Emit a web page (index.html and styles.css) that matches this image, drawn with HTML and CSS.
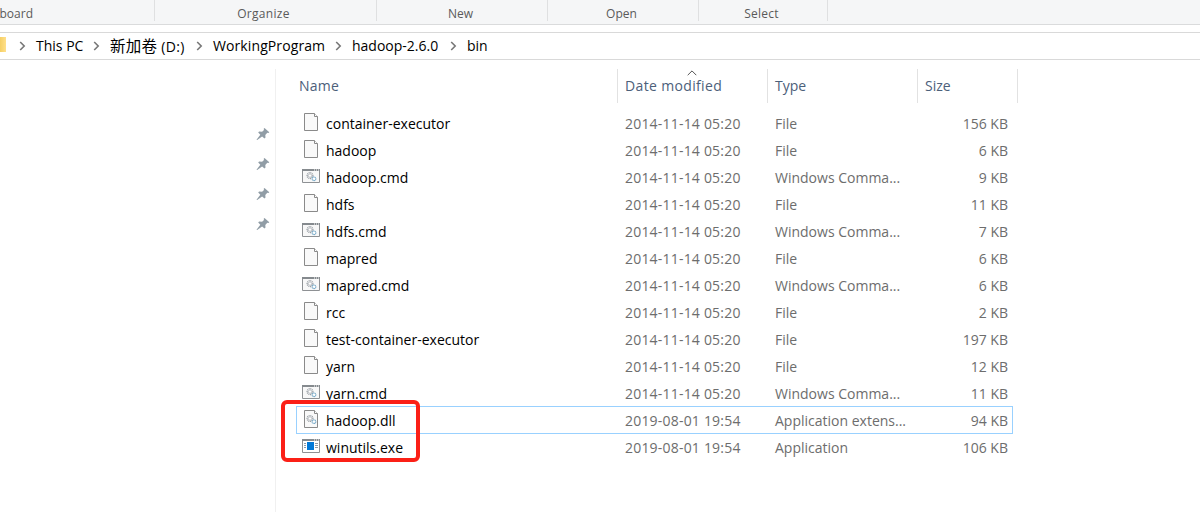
FILE: index.html
```html
<!DOCTYPE html>
<html>
<head>
    <title>bin</title>
    <meta charset="UTF-8">
    <link rel="stylesheet" href="styles.css">
</head>
<body>
    <svg class="symbols">
        <symbol id="file" viewBox="0 0 18 19">
            <path d="M2.5 .5h10l3 3v14h-13z" fill="#f9f9f9" stroke="#8a8a8a"/>
            <path d="M12.5 .5v3h3" fill="#fff" stroke="#8a8a8a"/>
        </symbol>
        <symbol id="gears" viewBox="0 0 11 10">
            <circle cx="4" cy="4" r="2.9" fill="none" stroke="#9aa0a6" stroke-width="1.3" stroke-dasharray="1.1 .6"/>
            <circle cx="4" cy="4" r="1.7" fill="#fff" stroke="#9aa0a6" stroke-width=".6"/>
            <circle cx="8" cy="7.2" r="1.8" fill="#fff" stroke="#79abc9" stroke-width="1.2" stroke-dasharray="1.1 .3"/>
        </symbol>
        <symbol id="cmd" viewBox="0 0 18 14">
            <path d="M.5 .5h17v13h-17z" fill="#f8f8f8" stroke="#8e9194"/>
            <path d="M0 1h18" stroke="#858a8e" stroke-width="2"/>
            <path d="M12 1h1M14 1h1M16 1h1" stroke="#fff"/>
            <use href="#gears" x="4" y="2.6" width="11" height="10"/>
        </symbol>
        <symbol id="dll" viewBox="0 0 18 19">
            <use href="#file" width="18" height="19"/>
            <use href="#gears" x="4" y="4.5" width="11" height="10"/>
        </symbol>
        <symbol id="exe" viewBox="0 0 18 14">
            <path d="M.5 .5h17v13h-17z" fill="#fff" stroke="#8e9194"/>
            <path d="M0 1h18" stroke="#858a8e" stroke-width="2"/>
            <path d="M12 1h1M14 1h1M16 1h1" stroke="#fff"/>
            <path d="M5 3h7v8h-7z" fill="#0078d7"/>
            <path d="M2 4.5h2M2 6.5h2M2 8.5h2M13 4.5h3M13 6.5h3M13 8.5h3" stroke="#8f9ba5"/>
        </symbol>
        <symbol id="pin" viewBox="0 0 14 14">
            <path d="M8.5 1l4.8 4.2-.8.8-1.2-.2-2 2.1.2 2.7-1 1-2.4-2.2L1.2 13H.7v-.6l3.6-4.7L2.2 5.4l.9-.9 3 .2L8 2.9 7.7 1.7z" fill="#919da6"/>
        </symbol>
        <symbol id="chevron" viewBox="0 0 7 10">
            <path d="M1.2 1l4 4-4 4" fill="none" stroke="#777" stroke-width="1.6"/>
        </symbol>
    </svg>

    <div class="ribbon">
        <div class="group clipboard">Clipboard</div>
        <div class="group organize">Organize</div>
        <div class="group new">New</div>
        <div class="group open">Open</div>
        <div class="group select">Select</div>
    </div>

    <div class="address">
        <div class="folder"></div>
        <svg class="chevron"><use href="#chevron"/></svg>
        <span class="crumb pc">This PC</span>
        <svg class="chevron"><use href="#chevron"/></svg>
        <span class="crumb drive"><span class="label">新加卷</span> (D:)</span>
        <svg class="chevron"><use href="#chevron"/></svg>
        <span class="crumb program">WorkingProgram</span>
        <svg class="chevron"><use href="#chevron"/></svg>
        <span class="crumb hadoop">hadoop-2.6.0</span>
        <svg class="chevron"><use href="#chevron"/></svg>
        <span class="crumb">bin</span>
    </div>

    <div class="main">
        <div class="sidebar">
            <svg class="pin"><use href="#pin"/></svg>
            <svg class="pin"><use href="#pin"/></svg>
            <svg class="pin"><use href="#pin"/></svg>
            <svg class="pin"><use href="#pin"/></svg>
        </div>
        <div class="files">
            <div class="row head">
                <div class="name">Name</div>
                <div class="date">Date modified
                    <svg class="sort" viewBox="0 0 10 6"><path d="M.7 5.2L5 .9l4.3 4.3" fill="none" stroke="#555"/></svg>
                </div>
                <div class="type">Type</div>
                <div class="size">Size</div>
            </div>
            <div class="list">
                <div class="row"><div class="name"><svg class="icon tall"><use href="#file"/></svg>container-executor</div><div class="date">2014-11-14 05:20</div><div class="type">File</div><div class="size">156 KB</div></div>
                <div class="row"><div class="name"><svg class="icon tall"><use href="#file"/></svg>hadoop</div><div class="date">2014-11-14 05:20</div><div class="type">File</div><div class="size">6 KB</div></div>
                <div class="row"><div class="name"><svg class="icon"><use href="#cmd"/></svg>hadoop.cmd</div><div class="date">2014-11-14 05:20</div><div class="type">Windows Comma...</div><div class="size">9 KB</div></div>
                <div class="row"><div class="name"><svg class="icon tall"><use href="#file"/></svg>hdfs</div><div class="date">2014-11-14 05:20</div><div class="type">File</div><div class="size">11 KB</div></div>
                <div class="row"><div class="name"><svg class="icon"><use href="#cmd"/></svg>hdfs.cmd</div><div class="date">2014-11-14 05:20</div><div class="type">Windows Comma...</div><div class="size">7 KB</div></div>
                <div class="row"><div class="name"><svg class="icon tall"><use href="#file"/></svg>mapred</div><div class="date">2014-11-14 05:20</div><div class="type">File</div><div class="size">6 KB</div></div>
                <div class="row"><div class="name"><svg class="icon"><use href="#cmd"/></svg>mapred.cmd</div><div class="date">2014-11-14 05:20</div><div class="type">Windows Comma...</div><div class="size">6 KB</div></div>
                <div class="row"><div class="name"><svg class="icon tall"><use href="#file"/></svg>rcc</div><div class="date">2014-11-14 05:20</div><div class="type">File</div><div class="size">2 KB</div></div>
                <div class="row"><div class="name"><svg class="icon tall"><use href="#file"/></svg>test-container-executor</div><div class="date">2014-11-14 05:20</div><div class="type">File</div><div class="size">197 KB</div></div>
                <div class="row"><div class="name"><svg class="icon tall"><use href="#file"/></svg>yarn</div><div class="date">2014-11-14 05:20</div><div class="type">File</div><div class="size">12 KB</div></div>
                <div class="row"><div class="name"><svg class="icon"><use href="#cmd"/></svg>yarn.cmd</div><div class="date">2014-11-14 05:20</div><div class="type">Windows Comma...</div><div class="size">11 KB</div></div>
                <div class="row focused"><div class="name"><svg class="icon tall"><use href="#dll"/></svg>hadoop.dll</div><div class="date">2019-08-01 19:54</div><div class="type">Application extens...</div><div class="size">94 KB</div></div>
                <div class="row"><div class="name"><svg class="icon"><use href="#exe"/></svg>winutils.exe</div><div class="date">2019-08-01 19:54</div><div class="type">Application</div><div class="size">106 KB</div></div>
                <div class="marker"></div>
            </div>
        </div>
    </div>
</body>
</html>
```
FILE: styles.css
```css
* {
    box-sizing: border-box;
}
body {
    margin: 0;
    height: 512px;
    overflow: hidden;
    background-color: #fff;
    font-family: "Open Sans", "Noto Sans CJK SC", sans-serif;
    font-size: 14px;
    color: #000;
    white-space: nowrap;
}
.symbols {
    display: none;
}
.ribbon {
    display: flex;
    height: 25px;
    background-color: #f5f6f7;
    border-bottom: 1px solid #dadbdc;
    font-size: 12px;
    color: #5a5a5a;
}
.group {
    height: 21px;
    line-height: 27px;
    border-right: 1px solid #dfe0e1;
    text-align: center;
}
.clipboard {
    display: flex;
    justify-content: flex-end;
    width: 155px;
    padding-right: 121px;
}
.organize {
    width: 222px;
    padding-right: 4px;
    letter-spacing: 0.3px;
}
.new { width: 171px; padding-right: 3px; }
.open { width: 151px; padding-right: 3px; }
.select { width: 129px; padding-right: 3px; letter-spacing: 0.2px; }

.address {
    display: flex;
    align-items: center;
    height: 28px;
    margin-top: 7px;
    border-top: 1px solid #d9d9d9;
    border-bottom: 1px solid #d9d9d9;
}
.folder {
    width: 6px;
    height: 15px;
    margin: -3px 13px 0 0;
    background: linear-gradient(to right, #f5cf66, #ffe08a);
}
.chevron {
    width: 7px;
    height: 10px;
    margin-right: 10px;
}
.crumb {
    height: 26px;
    line-height: 26px;
}
.pc { width: 57px; }
.drive { width: 86px; letter-spacing: 0.3px; }
.label {
    font-size: 15.5px;
}
.program { width: 122px; letter-spacing: 0.1px; }
.hadoop { width: 98px; }

.main {
    display: flex;
    height: 452px;
    padding-top: 9px;
}
.sidebar {
    display: flex;
    flex-direction: column;
    align-items: flex-end;
    gap: 16px;
    width: 276px;
    padding: 58px 5px 0 0;
    border-right: 1px solid #f0f0f0;
}
.pin {
    width: 14px;
    height: 14px;
}
.files {
    padding-left: 20px;
}
.row {
    display: grid;
    grid-template-columns: 322px 150px 150px 100px;
    width: 722px;
    height: 27px;
    line-height: 29px;
    color: #6d6d6d;
}
.row > div {
    padding-left: 7px;
}
.row .name {
    display: flex;
    gap: 6px;
    padding-left: 6px;
    color: #000;
}
.row .date {
    letter-spacing: 0.2px;
}
.row .size {
    padding-right: 10px;
    text-align: right;
}
.icon {
    width: 18px;
    height: 14px;
    margin-top: 6px;
}
.tall {
    height: 19px;
    margin-top: 4px;
}
.head {
    height: 32px;
    line-height: 34px;
}
.row.head > div {
    color: #4c607a;
    border-right: 1px solid #e2e2e2;
}
.row.head .name {
    padding-left: 3px;
    letter-spacing: 0.2px;
}
.row.head .date {
    position: relative;
    letter-spacing: 0.35px;
}
.row.head .size {
    text-align: left;
}
.sort {
    position: absolute;
    left: 69px;
    top: 1px;
    width: 10px;
    height: 6px;
}
.list {
    position: relative;
    padding-top: 8px;
}
/* outline is drawn as a shadow so the columns stay aligned */
.focused {
    width: 717px;
    box-shadow: inset 0 0 0 1px #99d1ff, inset 0 0 0 0 #99d1ff;
    height: 28px;
    margin-bottom: -1px;
}
.marker {
    position: absolute;
    left: -15px;
    top: 299px;
    width: 139px;
    height: 62px;
    border: 4px solid #fb2017;
    border-radius: 6px;
}
```
